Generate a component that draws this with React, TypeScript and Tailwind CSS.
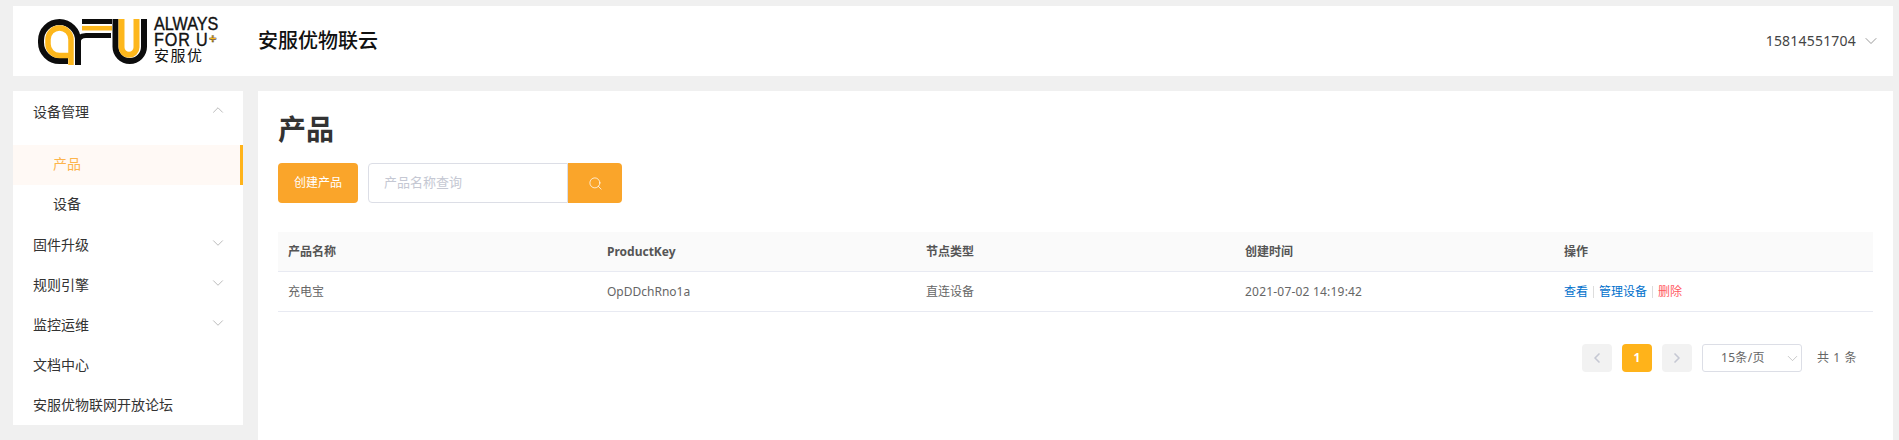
import React from "react";
import { ChevronDown, ChevronLeft, ChevronRight, ChevronUp, Search } from "lucide-react";

const font = "font-['Noto_Sans','Noto_Sans_CJK_SC',sans-serif]";

const Logo = () => (
  <div className="flex items-center h-full pl-[23px]">
    <svg width="116" height="52" viewBox="0 0 116 52" fill="none" className="shrink-0">
      {/* a */}
      <path d="M42 50V25.5A19 18.5 0 0 0 23.5 7A18.5 18.5 0 0 0 5 25.5V27.5A18.5 18.5 0 0 0 23.5 46H32" stroke="#0c0c0c" strokeWidth="6" />
      <path d="M35 50V24.5A11.5 11.5 0 0 0 23.5 13A11.5 11.5 0 0 0 12 24.5V29A11.5 11.5 0 0 0 23.5 40.5H35" stroke="#fdb71c" strokeWidth="5.5" />
      {/* F */}
      <path d="M46 6.5H76" stroke="#0c0c0c" strokeWidth="5" />
      <path d="M46 13.2H76" stroke="#fdb71c" strokeWidth="4.6" />
      <path d="M42 28C42 23 45 20.5 50 20.5H75" stroke="#0c0c0c" strokeWidth="5" />
      {/* U */}
      <path d="M79.5 4V31.75A14.25 14.25 0 0 0 108 31.75V4" stroke="#0c0c0c" strokeWidth="6" />
      <path d="M85.5 4V32.25A7.5 7.5 0 0 0 100.5 32.25V4" stroke="#fdb71c" strokeWidth="6" />
    </svg>
    <div className="flex flex-col ml-[2px] -mt-[3px] text-[#111] [-webkit-text-stroke:0.4px_#111] font-['Liberation_Sans','Noto_Sans_CJK_SC',sans-serif]">
      <span className="w-[76px] text-[19px] leading-[16px] origin-left scale-x-[0.85] whitespace-nowrap">ALWAYS</span>
      <div className="flex items-start">
        <span className="w-[55px] text-[19px] leading-[16px] origin-left scale-x-[0.85] tracking-[1px] whitespace-nowrap">FOR U</span>
        <span className="text-[#fdb71c] text-[13px] font-bold leading-none">+</span>
      </div>
      <span className="text-[15px] leading-[15px] tracking-[1.5px] [-webkit-text-stroke:0]">安服优</span>
    </div>
  </div>
);

const MenuItem = ({ label, arrow }: { label: string; arrow?: "up" | "down" }) => (
  <div className="h-10 flex items-center justify-between pl-[20px] pr-[16px] text-sm text-[#333]">
    <span>{label}</span>
    {arrow === "up" && <ChevronUp size={18} strokeWidth={0.9} className="text-[#999] -mt-[4px]" />}
    {arrow === "down" && <ChevronDown size={18} strokeWidth={0.9} className="text-[#999] -mt-[4px]" />}
  </div>
);

const Sidebar = () => (
  <aside className="w-[230px] h-[334px] bg-white shrink-0">
    <div className="pt-px pb-[13px]">
      <MenuItem label="设备管理" arrow="up" />
    </div>
    <div className="h-10 flex items-center pl-[40px] pb-[2px] text-sm text-[#fdb44b] bg-[#fff9f5] border-r-[3px] border-[#ffb31a]">
      产品
    </div>
    <div className="h-10 flex items-center pl-[40px] pb-[2px] text-sm text-[#333]">设备</div>
    <MenuItem label="固件升级" arrow="down" />
    <MenuItem label="规则引擎" arrow="down" />
    <MenuItem label="监控运维" arrow="down" />
    <MenuItem label="文档中心" />
    <MenuItem label="安服优物联网开放论坛" />
  </aside>
);

const columns = ["产品名称", "ProductKey", "节点类型", "创建时间", "操作"];

const ProductTable = () => (
  <div className="mt-[29px] text-xs">
    <div className="grid grid-cols-5 h-10 bg-[#fafafa] border-b border-[#e8eaf2] items-center font-bold text-[#555]">
      {columns.map((c) => (
        <div key={c} className="px-[10px]">
          {c}
        </div>
      ))}
    </div>
    <div className="grid grid-cols-5 h-10 border-b border-[#e8eaf2] items-center text-[#666]">
      <div className="px-[10px]">充电宝</div>
      <div className="px-[10px]">OpDDchRno1a</div>
      <div className="px-[10px]">直连设备</div>
      <div className="px-[10px] tracking-[0.2px]">2021-07-02 14:19:42</div>
      <div className="px-[10px] flex items-center">
        <a className="text-[#0070cc]">查看</a>
        <span className="mx-[5px] h-3 w-px bg-[#ddd]" />
        <a className="text-[#0070cc]">管理设备</a>
        <span className="mx-[5px] h-3 w-px bg-[#ddd]" />
        <a className="text-[#ff5a5f]">删除</a>
      </div>
    </div>
  </div>
);

const Pagination = () => (
  <div className="flex items-center justify-end mt-[32px] pr-[14px] text-xs text-[#666]">
    <div className="w-[30px] h-7 bg-[#f2f2f2] rounded-sm flex items-center justify-center">
      <ChevronLeft size={16} strokeWidth={2.5} className="text-[#c5c8d3]" />
    </div>
    <div className="w-[30px] h-7 ml-[10px] bg-[#ffb31a] rounded-sm flex items-center justify-center text-white font-bold">
      1
    </div>
    <div className="w-[30px] h-7 ml-[10px] bg-[#f2f2f2] rounded-sm flex items-center justify-center">
      <ChevronRight size={16} strokeWidth={2.5} className="text-[#c5c8d3]" />
    </div>
    <div className="w-[100px] h-7 ml-[10px] border border-[#dcdee6] rounded-[3px] flex items-center justify-between pl-[18px]">
      <span className="tracking-[0.3px]">15条/页</span>
      <ChevronDown size={17} strokeWidth={0.9} className="text-[#aaa]" />
    </div>
    <span className="ml-[15px] whitespace-nowrap tracking-[0.6px] w-[42px]">共 1 条</span>
  </div>
);

export default function App() {
  return (
    <div className={`${font} w-[1899px] h-[440px] bg-[#f0f0f0] overflow-hidden pt-[6px] pl-[13px] pr-[6px]`}>
      <header className="h-[70px] flex bg-white">
        <div className="w-[230px] h-[69px] shrink-0">
          <Logo />
        </div>
        <div className="flex-1 flex items-center justify-between pl-[15px] pr-[12px]">
          <h1 className="text-[20px] font-medium text-[#111]">安服优物联云</h1>
          <div className="flex items-center gap-[5px] text-sm tracking-[0.2px] text-[#444]">
            <span>15814551704</span>
            <ChevronDown size={20} strokeWidth={0.9} className="text-[#777]" />
          </div>
        </div>
      </header>
      <div className="flex mt-[15px] gap-[15px] items-start">
        <Sidebar />
        <main className="flex-1 h-[349px] bg-white px-[20px] pt-[18px]">
          <h2 className="text-[28px] leading-[40px] font-bold text-[#333]">产品</h2>
          <div className="flex mt-[14px] h-10 text-xs">
            <button className="w-20 rounded-[4px] bg-[#faa52a] text-white">创建产品</button>
            <div className="ml-[10px] flex">
              <div className="w-[200px] border border-[#dcdee6] rounded-l-[4px] flex items-center pl-[15px] text-[13px] text-[#c5c8d3]">
                产品名称查询
              </div>
              <button className="w-[54px] bg-[#faa52a] rounded-r-[4px] flex items-center justify-center text-white">
                <Search size={15} strokeWidth={1.2} />
              </button>
            </div>
          </div>
          <ProductTable />
          <Pagination />
        </main>
      </div>
    </div>
  );
}
